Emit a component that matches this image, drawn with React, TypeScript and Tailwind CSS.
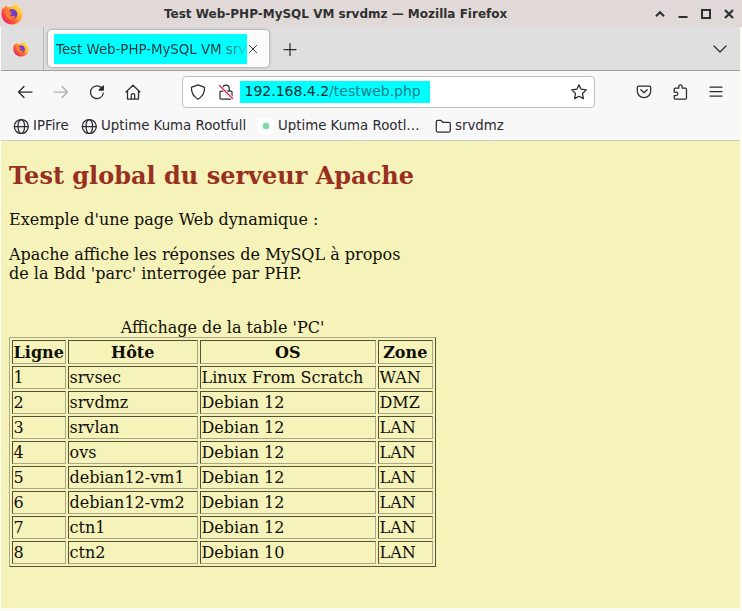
import React from "react";

const Firefox = ({ size }: { size: number }) => (
  <svg width={size} height={size} viewBox="0 0 24 24" className="shrink-0">
    <defs>
      <linearGradient id="flame" x1="0.9" y1="0.1" x2="0.15" y2="0.8">
        <stop offset="0" stopColor="#ffe85a" />
        <stop offset="0.4" stopColor="#ffb02e" />
        <stop offset="0.7" stopColor="#ff5f36" />
        <stop offset="1" stopColor="#ea2f58" />
      </linearGradient>
    </defs>
    <path
      d="M22.6 8.3C22 6.8 20.8 5.2 19.800 4.700C19.600 3 17.500 1.500 15.800 0.300C14.500 1.500 13.600 2.600 13.200 3.900C11 3.500 9 4 7.500 5C6.500 4.500 6.100 3.500 6 2.500C4.500 3.100 3.400 4.800 3 6.200C2.400 6 2.200 5.200 2.200 4.600C0.800 6.500 0.300 9.800 0.500 12.500C0.900 18.800 5.800 23.400 12 23.400C18.400 23.400 23.400 18.400 23.400 12.300C23.400 10.800 23.200 9.500 22.600 8.300Z"
      fill="url(#flame)"
    />
    <circle cx="12.200" cy="12.200" r="5.600" fill="#6b3fc4" />
    <path
      d="M5 8C7.600 7.600 9.500 8 11 9.300C13 9 14.200 9.800 14.300 10.600C12.500 10.800 12.200 11.600 11 12.200C10 12.700 9.600 13.200 10.600 14C11.800 15 14 14.800 15.200 13.400C16 16 13.500 18.400 10.700 17.900C7 17.300 4.200 13.500 5 8Z"
      fill="#ff7a33"
    />
    <path d="M10.300 9.400C12.300 8.300 14.400 9.500 14.400 11.400C14.400 13.400 12.400 14.300 10.800 13.600C11.900 13 12.900 12.500 12.700 11.300C12.300 10.700 11.300 10.700 10.300 11.400Z" fill="#6b3fc4" />
  </svg>
);

type IconProps = { children: React.ReactNode; size?: number; className?: string };
const Icon = ({ children, size = 16, className = "" }: IconProps) => (
  <svg
    width={size}
    height={size}
    viewBox="0 0 16 16"
    fill="none"
    stroke="currentColor"
    strokeWidth="1.25"
    strokeLinecap="round"
    strokeLinejoin="round"
    className={"shrink-0 " + className}
  >
    {children}
  </svg>
);

const Globe = () => (
  <Icon>
    <circle cx="8.300" cy="8.500" r="7" />
    <ellipse cx="8.300" cy="8.500" rx="3.300" ry="7" />
    <path d="M1.300 8.500H15.300" />
  </Icon>
);

const rows = [
  ["1", "srvsec", "Linux From Scratch", "WAN"],
  ["2", "srvdmz", "Debian 12", "DMZ"],
  ["3", "srvlan", "Debian 12", "LAN"],
  ["4", "ovs", "Debian 12", "LAN"],
  ["5", "debian12-vm1", "Debian 12", "LAN"],
  ["6", "debian12-vm2", "Debian 12", "LAN"],
  ["7", "ctn1", "Debian 12", "LAN"],
  ["8", "ctn2", "Debian 10", "LAN"],
];

const cell =
  "border border-t-[#545132] border-l-[#545132] border-r-[#a9a789] border-b-[#a9a789] pl-[0.5px] pr-px whitespace-nowrap leading-[19px]";

export default function App() {
  return (
    <div className="flex h-[611px] w-[742px] flex-col overflow-hidden bg-[#fbfaf3] font-['DejaVu_Sans',sans-serif] text-[13.33px] text-[#2b2b30]">
      <header className="flex h-[27px] shrink-0 items-center bg-[#e0d9d8] pl-px pr-[6px]">
        <div className="flex w-[163px] items-center">
          <Firefox size={22} />
        </div>
        <h1 className="w-[346px] whitespace-nowrap pt-px text-[12px] font-bold leading-[27px] text-[#2f3030]">
          Test Web-PHP-MySQL VM srvdmz — Mozilla Firefox
        </h1>
        <div className="ml-auto flex items-center gap-[9px] text-[#2e3030]">
          <svg width="14" height="14" viewBox="0 0 14 14" fill="none" stroke="currentColor" strokeWidth="2.200">
            <path d="M3 9.300L7 5.300L11 9.300" />
          </svg>
          <svg width="14" height="14" viewBox="0 0 14 14" fill="none" stroke="currentColor" strokeWidth="2">
            <path d="M2.500 10H11.500" />
          </svg>
          <svg width="14" height="14" viewBox="0 0 14 14" fill="none" stroke="currentColor" strokeWidth="2">
            <path d="M3 3H11V11H3Z" />
          </svg>
          <svg width="14" height="14" viewBox="0 0 14 14" fill="none" stroke="currentColor" strokeWidth="2.200">
            <path d="M3 3L11 11M11 3L3 11" />
          </svg>
        </div>
      </header>

      <div className="mx-px mr-[2px] flex h-[44px] shrink-0 items-center border-b border-[#9e9e9f] bg-[#dfdfdf]">
        <div className="flex h-full w-[43px] items-center justify-center border-r border-[#b9b9b9] pr-[3px]">
          <Firefox size={16} />
        </div>
        <div className="ml-[4px] flex h-[37px] w-[221px] items-center rounded-[4px] bg-[#fbfbfb] pl-[6px] shadow-[0_0_3px_rgba(0,0,0,0.45)]">
          <div className="h-[30px] w-[193px] bg-[#00ffff] pl-[2px]">
            <div className="w-[191px] bg-gradient-to-r from-[#15353a] from-[85%] to-[#00ffff] to-[102%] bg-clip-text whitespace-nowrap pt-px leading-[30px] text-transparent">
              Test Web-PHP-MySQL VM srv
            </div>
          </div>
          <Icon size={12} className="text-[#333]">
            <path d="M3 3L13 13M13 3L3 13" />
          </Icon>
        </div>
        <Icon className="ml-[13px]">
          <path d="M8 2.500V14.500M2 8.500H14" />
        </Icon>
        <Icon className="ml-auto mr-[12px]">
          <path d="M2 5L8 11L14 5" />
        </Icon>
      </div>

      <div className="mx-px mr-[2px] flex h-[41px] shrink-0 items-center bg-[#f8f8f8] pl-[16px] pr-[16px]">
        <div className="flex w-[165px] items-center gap-[20px]">
          <Icon>
            <path d="M15 8H1.500M7 2.500L1.500 8L7 13.500" />
          </Icon>
          <Icon className="text-[#aeaeb0]">
            <path d="M1 8H14.500M9 2.500L14.500 8L9 13.500" />
          </Icon>
          <Icon>
            <path d="M13.200 4.600A6.400 6.400 0 1 0 14.300 9" />
            <path d="M14.300 2V6H10.200Z" fill="currentColor" />
          </Icon>
          <Icon>
            <path d="M1 8L8 1.200L15 8M2.500 6.800V15H13.500V6.800M6.300 14.800V11Q6.300 9.500 8 9.500T9.700 11V14.800" />
          </Icon>
        </div>
        <div className="flex h-[32px] w-[413px] items-center rounded-[4px] border border-[#bfbfc2] bg-white pl-[7px] pr-[7px]">
          <Icon>
            <path d="M8 0.800L14.600 3.300C14.700 9 13 12.500 8 15.200C3 12.500 1.300 9 1.400 3.300Z" />
          </Icon>
          <Icon className="ml-[12px]">
            <path d="M4.800 7V4.200A3.200 3.200 0 0 1 11.200 4.200V7M3 7H13Q14 7 14 8V14Q14 15 13 15H3Q2 15 2 14V8Q2 7 3 7Z" />
            <path d="M1.500 1.500L14.500 14.500" stroke="#fff" strokeWidth="3" />
            <path d="M1.500 1.500L14.500 14.500" stroke="#d5264c" strokeWidth="1.300" />
          </Icon>
          <div className="ml-[6px] h-[22px] w-[190px] whitespace-nowrap bg-[#00ffff] pl-[4.5px] text-[14px] leading-[21px] text-[#147f88]">
            <span className="text-[#082b30]">192.168.4.2</span>/testweb.php
          </div>
          <Icon className="ml-auto">
            <path d="M8 0.700L10.100 5.200L15.200 5.900L11.500 9.500L12.400 14.600L8 12.200L3.600 14.600L4.500 9.500L0.800 5.900L5.900 5.200Z" />
          </Icon>
        </div>
        <div className="ml-auto flex items-center gap-[20px]">
          <Icon>
            <path d="M2.500 2H13.500Q14.700 2 14.700 3.200V7A6.700 6.700 0 0 1 1.300 7V3.200Q1.300 2 2.500 2ZM4.800 5.700L8 8.700L11.200 5.700" />
          </Icon>
          <Icon>
            <path d="M3.300 4.200H6.800V2.500A1.700 1.700 0 0 1 10.200 2.500V4.200H13.300Q14.500 4.200 14.500 5.400V13.900Q14.500 15 13.300 15H3.300Q2.200 15 2.200 13.900V11.600H4A1.800 1.800 0 0 0 4 8H2.200V5.400Q2.200 4.200 3.300 4.200Z" />
          </Icon>
          <Icon>
            <path d="M2 3H14M2 7.500H14M2 12H14" />
          </Icon>
        </div>
      </div>

      <nav className="mx-px mr-[2px] flex h-[29px] shrink-0 items-center whitespace-nowrap border-b border-[#cfcfc8] bg-[#f8f8f8] pl-[12px] text-[13.33px] leading-[28px]">
        <div className="flex w-[68px] items-center gap-[4px]">
          <Globe />
          <span>IPFire</span>
        </div>
        <div className="flex w-[177px] items-center gap-[4px]">
          <Globe />
          <span>Uptime Kuma Rootfull</span>
        </div>
        <div className="flex w-[177px] items-center gap-[4px]">
          <span className="flex size-[16px] items-center justify-center rounded-sm bg-white">
            <span className="size-[6px] rounded-[2px] bg-[#7cd8a6] shadow-[0_0_2px_#a8e6c4]" />
          </span>
          <span>Uptime Kuma Rootl…</span>
        </div>
        <div className="flex items-center gap-[4px]">
          <Icon>
            <path d="M1.300 4Q1.300 2.300 2.800 2.300H5.800L7.800 4.300H13.800Q15.300 4.300 15.300 5.800V12.500Q15.300 14 13.800 14H2.800Q1.300 14 1.300 12.500Z" />
          </Icon>
          <span>srvdmz</span>
        </div>
      </nav>

      <main className="mx-px mr-[2px] h-[467px] shrink-0 bg-[#f5f2ba] pl-[8px] pt-[21px] font-['DejaVu_Serif',serif] text-[16px] leading-[19px] text-[#100f08]">
        <h2 className="text-[24px] font-bold leading-[28px] text-[#982f20]">Test global du serveur Apache</h2>
        <p className="mt-[20px]">Exemple d'une page Web dynamique :</p>
        <p className="mt-[16px]">
          Apache affiche les réponses de MySQL à propos
          <br />
          de la Bdd 'parc' interrogée par PHP.
        </p>
        <table className="mt-[35px] w-[427px] table-fixed border-separate border-spacing-[2px] border border-t-[#a9a789] border-l-[#a9a789] border-r-[#545132] border-b-[#545132]">
          <caption className="leading-[19px]">Affichage de la table 'PC'</caption>
          <colgroup>
            <col className="w-[54px]" />
            <col className="w-[130px]" />
            <col className="w-[176px]" />
            <col className="w-[55px]" />
          </colgroup>
          <thead>
            <tr className="h-[24px]">
              {["Ligne", "Hôte", "OS", "Zone"].map((h) => (
                <th key={h} className={cell + " text-center font-bold"}>{h}</th>
              ))}
            </tr>
          </thead>
          <tbody>
            {rows.map((r) => (
              <tr key={r[0]} className="h-[23px]">
                {r.map((c, i) => (
                  <td key={i} className={cell}>{c}</td>
                ))}
              </tr>
            ))}
          </tbody>
        </table>
      </main>
    </div>
  );
}
